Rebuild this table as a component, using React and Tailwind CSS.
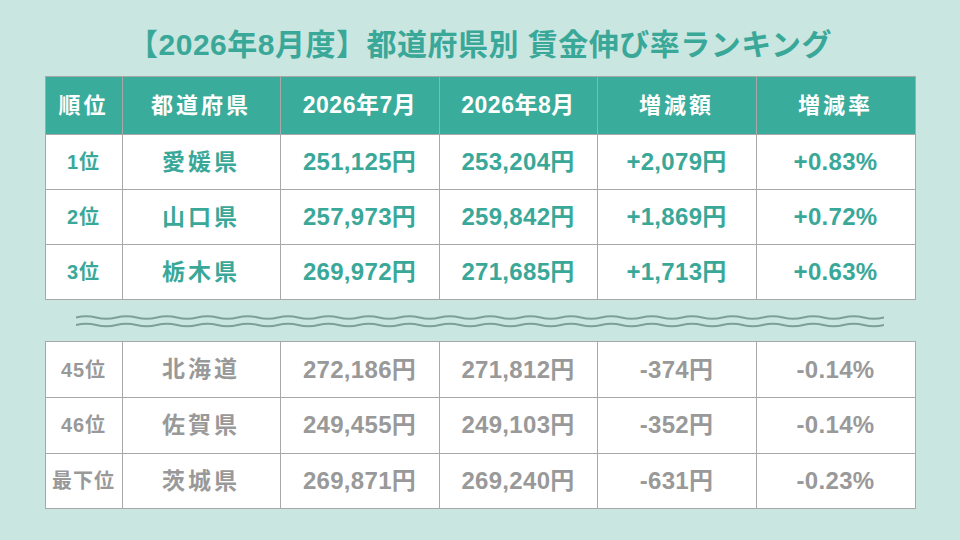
const topRows = [
  ["1位", "愛媛県", "251,125円", "253,204円", "+2,079円", "+0.83%"],
  ["2位", "山口県", "257,973円", "259,842円", "+1,869円", "+0.72%"],
  ["3位", "栃木県", "269,972円", "271,685円", "+1,713円", "+0.63%"],
];

const bottomRows = [
  ["45位", "北海道", "272,186円", "271,812円", "-374円", "-0.14%"],
  ["46位", "佐賀県", "249,455円", "249,103円", "-352円", "-0.14%"],
  ["最下位", "茨城県", "269,871円", "269,240円", "-631円", "-0.23%"],
];

const headers = ["順位", "都道府県", "2026年7月", "2026年8月", "増減額", "増減率"];

function Cols() {
  return (
    <colgroup>
      <col className="w-[77px]" />
      <col className="w-[158px]" />
      <col className="w-[159px]" />
      <col className="w-[158px]" />
      <col className="w-[159px]" />
      <col className="w-[159px]" />
    </colgroup>
  );
}

function Row({ cells, tone, height }) {
  const color = tone === "teal" ? "text-[#3aa898]" : "text-[#999999]";
  return (
    <tr className={height}>
      {cells.map((c, i) => (
        <td
          key={i}
          className={
            "border border-[#a8a8a8] bg-white p-0 text-center align-middle " +
            color +
            (i === 0
              ? " text-[20px] tracking-[1px]"
              : i === 1
              ? " text-[23px] tracking-[3px]"
              : " text-[24px] tracking-[0.3px]")
          }
        >
          {c}
        </td>
      ))}
    </tr>
  );
}

function Wave({ y }) {
  let d = `M0 ${y}`;
  for (let i = 0; i < 20; i++) {
    const x = i * 40.4;
    d += ` Q${x + 10.1} ${y - 2.5} ${x + 20.2} ${y} T${x + 40.4} ${y}`;
  }
  return <path d={d} fill="none" stroke="#7d9f99" strokeWidth="2" />;
}

export default function App() {
  return (
    <main
      className="flex h-[540px] w-[960px] flex-col items-center bg-[#c9e6e1] font-bold"
      style={{ fontFamily: '"Liberation Sans", "Noto Sans CJK JP", sans-serif' }}
    >
      <h1 className="flex h-[76px] items-center pt-[12px] text-[30px] tracking-[0.5px] text-[#3aa898]">
        【2026年8月度】都道府県別 賃金伸び率ランキング
      </h1>

      <table className="w-[870px] table-fixed border-collapse">
        <Cols />
        <thead>
          <tr className="h-[58px]">
            {headers.map((h, i) => (
              <th
                key={h}
                className={
                  "border border-[#a8a8a8] bg-[#3aac9c] p-0 text-center align-middle font-bold text-white " +
                  (i === 2 || i === 3 ? "text-[23px] tracking-[0.5px]" : "text-[22px] tracking-[3px]")
                }
              >
                {h}
              </th>
            ))}
          </tr>
        </thead>
        <tbody>
          {topRows.map((r) => (
            <Row key={r[0]} cells={r} tone="teal" height="h-[55px]" />
          ))}
        </tbody>
      </table>

      <div className="flex h-[41px] w-[808px] items-center">
        <svg width="808" height="14" viewBox="0 0 808 14">
          <Wave y={3.5} />
          <Wave y={11} />
        </svg>
      </div>

      <table className="w-[870px] table-fixed border-collapse">
        <Cols />
        <tbody>
          {bottomRows.map((r, i) => (
            <Row key={r[0]} cells={r} tone="gray" height={i === 0 ? "h-[56px]" : "h-[55.5px]"} />
          ))}
        </tbody>
      </table>
    </main>
  );
}
